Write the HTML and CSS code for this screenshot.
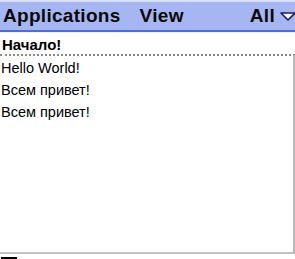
FILE: index.html
```html
<!DOCTYPE html>
<html>
<head>
<meta charset="utf-8">
<link rel="stylesheet" href="styles.css">
</head>
<body>
<div class="screen">
  <div class="menubar">
    <span class="menu-item apps">Applications</span>
    <span class="menu-item view">View</span>
    <span class="spacer"></span>
    <span class="menu-item all">All</span>
    <svg class="arrow" width="16" height="10" viewBox="0 0 16 10"><path d="M1 1 L15 1 L8 8 Z" fill="#ffffff" stroke="#1a1a6a" stroke-width="1.6" stroke-linejoin="round"/></svg>
  </div>
  <div class="title">Начало!</div>
  <div class="list">
    <div class="line">Hello World!</div>
    <div class="line">Всем привет!</div>
    <div class="line">Всем привет!</div>
  </div>
  <div class="cursor"></div>
</div>
</body>
</html>
```
FILE: styles.css
```css
html, body {
  margin: 0;
  padding: 0;
  background: #ffffff;
}
.screen {
  width: 295px;
  height: 259px;
  overflow: hidden;
  font-family: "Liberation Sans", Arial, sans-serif;
  color: #000;
  display: flex;
  flex-direction: column;
}
.menubar {
  height: 28px;
  flex: none;
  background: #a6b6f2;
  border-top: 2px solid #d8e0fa;
  border-bottom: 2px solid #4f6bd6;
  display: flex;
  align-items: center;
  padding-left: 3px;
  box-sizing: content-box;
}
.menu-item {
  font-weight: bold;
  font-size: 19px;
  color: #0a0a0a;
  letter-spacing: 0.3px;
}
.view {
  margin-left: 19px;
}
.spacer {
  flex: 1;
}
.all {
  margin-right: 5px;
}
.arrow {
  flex: none;
  margin-right: -1px;
  margin-top: 2px;
}
.title {
  flex: none;
  font-weight: bold;
  font-size: 15px;
  line-height: 17px;
  padding: 3px 2px 0;
  height: 22px;
  box-sizing: border-box;
  border-top: 1px solid #eef0f6;
}
.list {
  flex: none;
  height: 200px;
  border-top: 2px dotted #8a8a8a;
  border-right: 2px solid #b8b8b8;
  border-bottom: 2px solid #c0c0c0;
  padding-top: 1px;
  box-sizing: border-box;
}
.line {
  font-size: 14.5px;
  height: 22px;
  line-height: 22px;
  padding-left: 1px;
}
.cursor {
  flex: none;
  width: 16px;
  height: 2px;
  background: #000;
  margin-top: 3px;
  margin-left: 1px;
}
```
